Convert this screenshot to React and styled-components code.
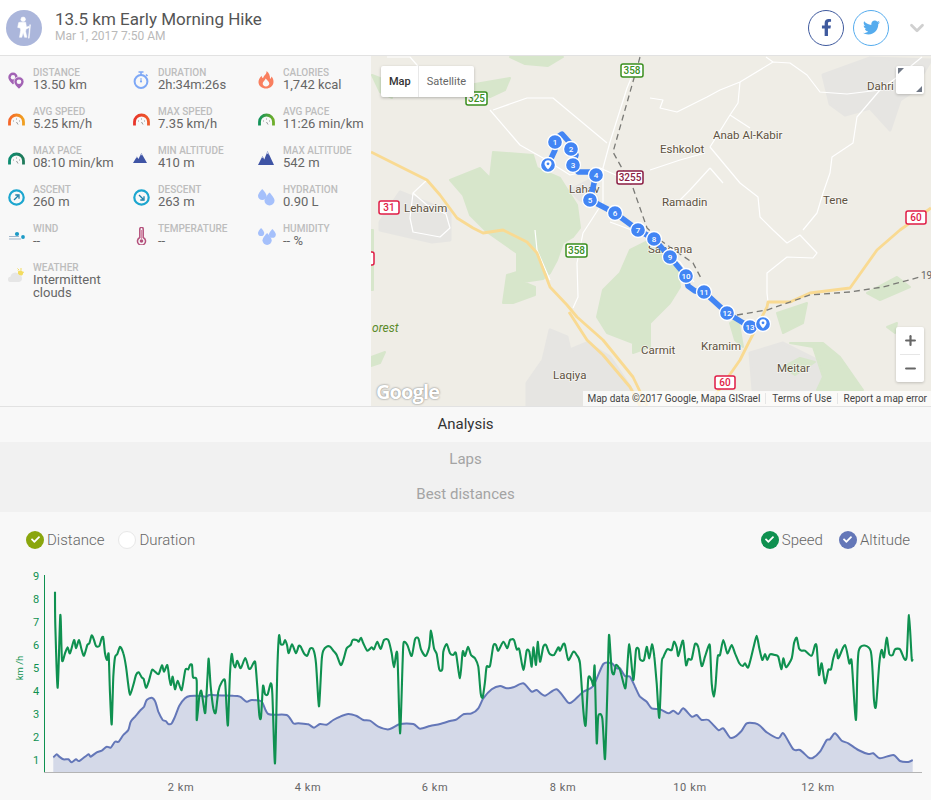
import styled, { createGlobalStyle } from 'styled-components'
import { FaFacebookF, FaTwitter, FaCheck } from 'react-icons/fa'
import { ChevronDown, Plus, Minus } from 'lucide-react'

const GlobalStyle = createGlobalStyle`
  html, body { margin: 0; padding: 0; background: #f8f8f8; }
  body { font-family: Roboto, 'Liberation Sans', sans-serif; overflow: hidden; }
`

const Page = styled.div`
  width: 931px;
  height: 800px;
  overflow: hidden;
  background: #f8f8f8;
`

const Header = styled.header`
  display: flex;
  align-items: center;
  height: 55px;
  padding: 0 3px 0 6px;
  box-sizing: content-box;
  background: #fff;
  border-bottom: 1px solid #e2e2e2;
`

const Avatar = styled.div`
  flex: none;
  display: flex;
  align-items: center;
  justify-content: center;
  width: 36px;
  height: 36px;
  border-radius: 50%;
  background: #abb6db;
`

const TitleBlock = styled.div`
  flex: 1;
  margin-left: 13px;
  margin-top: -3px;
`

const Title = styled.div`
  font-size: 17px;
  line-height: 20px;
  color: #555;
`

const SubTitle = styled.div`
  font-size: 12px;
  line-height: 14px;
  color: #b9b9b9;
`

const ShareButton = styled.div`
  display: flex;
  align-items: center;
  justify-content: center;
  width: 34px;
  height: 34px;
  margin-left: 9px;
  border-radius: 50%;
  background: #fff;
  border: 1px solid ${(p) => p.$color};
  color: ${(p) => p.$color};
  font-size: ${(p) => p.$size}px;
`

const Chevron = styled.div`
  display: flex;
  margin-left: 17px;
  color: #d0d0d0;
`

const Summary = styled.section`
  display: flex;
  height: 350px;
  border-bottom: 1px solid #e2e2e2;
`

const StatGrid = styled.div`
  flex: none;
  width: 363px;
  padding: 11px 0 0 8px;
  display: grid;
  grid-template-columns: repeat(3, 125px);
  grid-auto-rows: 39px;
`

const Stat = styled.div`
  display: flex;
  align-items: flex-start;
`

const StatIcon = styled.div`
  flex: none;
  width: 25px;
  height: 26px;
  display: flex;
  align-items: center;
`

const StatText = styled.div`
  flex: 1;
  min-width: 0;
`

const StatLabel = styled.div`
  font-size: 10px;
  font-weight: 500;
  line-height: 11px;
  color: #bdbdbd;
`

const StatValue = styled.div`
  font-size: 13px;
  line-height: 13px;
  color: #666;
`

const MapPane = styled.div`
  position: relative;
  flex: 1;
  overflow: hidden;
  background: #efede6;
`

const MapDrawing = styled.svg`
  display: block;
  width: 560px;
  height: 350px;
`

const MapTypes = styled.div`
  position: absolute;
  left: 10px;
  top: 10px;
  display: flex;
  height: 31px;
  background: #fff;
  border-radius: 2px;
  box-shadow: 0 1px 3px rgba(0, 0, 0, 0.25);
  font-size: 11px;
`

const MapType = styled.div`
  display: flex;
  align-items: center;
  padding: ${(p) => (p.$active ? '0 7px 0 8px' : '0 8px')};
  color: ${(p) => (p.$active ? '#333' : '#666')};
  font-weight: ${(p) => (p.$active ? 500 : 400)};
  border-left: ${(p) => (p.$active ? 'none' : '1px solid #e8e8e8')};
`

const FullscreenButton = styled.div`
  position: absolute;
  right: 7px;
  top: 10px;
  width: 28px;
  height: 28px;
  background: #fff;
  border-radius: 2px;
  box-shadow: 0 1px 3px rgba(0, 0, 0, 0.2);
`

const ZoomControl = styled.div`
  position: absolute;
  right: 7px;
  top: 271px;
  width: 28px;
  height: 55px;
  display: flex;
  flex-direction: column;
  align-items: center;
  background: #fff;
  border-radius: 2px;
  color: #666;
  box-shadow: 0 1px 3px rgba(0, 0, 0, 0.2);
`

const ZoomStep = styled.div`
  flex: 1;
  display: flex;
  align-items: center;
  justify-content: center;
`

const ZoomDivider = styled.div`
  width: 20px;
  height: 1px;
  background: #e6e6e6;
`

const GoogleMark = styled.div`
  position: absolute;
  left: 5px;
  bottom: 1px;
  font-family: 'Open Sans', 'Liberation Sans', sans-serif;
  font-size: 20px;
  font-weight: 700;
  line-height: 26px;
  letter-spacing: -0.9px;
  color: #fff;
  text-shadow: 0 0 2px rgba(90, 90, 90, 0.9);
`

const Attribution = styled.div`
  position: absolute;
  right: 0;
  bottom: 0;
  display: flex;
  height: 15px;
  align-items: center;
  background: rgba(255, 255, 255, 0.72);
  font-size: 10px;
  color: #444;
  white-space: nowrap;
`

const AttributionItem = styled.span`
  padding: 0 4px;
  & + & { margin-left: 1px; border-left: 1px solid #e6e6e6; padding-left: 6px; }
`

const Tab = styled.div`
  height: 35px;
  padding-bottom: 2px;
  box-sizing: border-box;
  display: flex;
  align-items: center;
  justify-content: center;
  font-size: 15px;
  color: ${(p) => (p.$active ? '#333' : '#a4a4a4')};
  background: ${(p) => (p.$active ? '#f8f8f8' : '#f1f1f1')};
`

const SeriesBar = styled.div`
  display: flex;
  align-items: center;
  justify-content: space-between;
  height: 48px;
  padding: 7px 21px 0 26px;
  box-sizing: border-box;
`

const SeriesGroup = styled.div`
  display: flex;
  gap: ${(p) => p.$gap}px;
`

const Series = styled.div`
  display: flex;
  align-items: center;
  gap: 3px;
  font-size: 15px;
  font-weight: 300;
  color: #666;
`

const SeriesDot = styled.span`
  display: flex;
  align-items: center;
  justify-content: center;
  width: 18px;
  height: 18px;
  box-sizing: border-box;
  border-radius: 50%;
  color: #fff;
  font-size: 9px;
  background: ${(p) => p.$color || '#fff'};
  border: ${(p) => (p.$color ? 'none' : '1px solid #e8e8e8')};
`

const ChartDrawing = styled.svg`
  display: block;
  width: 931px;
  height: 240px;
`

const pins = (
  <svg width="17" height="17" viewBox="0 0 17 17" fill="none">
    <path d="M5 .5A4.700 4.700 0 0 0 .3 5.200C.3 8.300 5 12.500 5 12.500s4.700-4.200 4.700-7.300A4.700 4.700 0 0 0 5 .5z" fill="#a262b4" />
    <circle cx="5" cy="5.200" r="2.200" fill="#f8f8f8" />
    <path d="M11 4.800a5 5 0 0 0-5 5c0 3.300 5 7.200 5 7.200s5-3.900 5-7.200a5 5 0 0 0-5-5z" fill="#a262b4" stroke="#f8f8f8" strokeWidth=".7" />
    <circle cx="11" cy="9.800" r="2.300" fill="#f8f8f8" />
  </svg>
)

const stopwatch = (
  <svg width="16" height="18" viewBox="0 0 16 18" fill="none">
    <circle cx="8" cy="10.500" r="6.400" stroke="#7ea8f6" strokeWidth="2" />
    <path d="M5.500 1h5M8 1v3M13 3.500l1.500 1.500" stroke="#7ea8f6" strokeWidth="1.600" />
    <circle cx="8" cy="10.500" r="1.100" fill="#7ea8f6" />
    <path d="M8 10.500V7" stroke="#7ea8f6" />
  </svg>
)

const flame = (
  <svg width="16" height="18" viewBox="0 0 16 18">
    <path d="M8.500 0c.6 3-3 4.600-3.400 7.300C4 6.800 3.700 5.600 3.800 4.700 1.500 6.800.3 9 .5 11.500.8 15 4 17.500 8 17.500s7.300-2.600 7.500-6.500c.1-2.400-.9-4-2-5.400-.2 1-.7 1.900-1.500 2.300C12.300 5 11 1.500 8.500 0z" fill="#f97f5f" />
    <path d="M8 15.500c-2 0-3.300-1.400-3.300-3 0-1.900 2-2.700 3-5 1.300 1.700 3.600 3.100 3.600 5.100 0 1.700-1.500 2.900-3.300 2.900z" fill="#f8f8f8" />
  </svg>
)

function Gauge({ id, from, to }) {
  return (
    <svg width="17" height="13" viewBox="0 0 17 13" fill="none">
      <defs>
        <linearGradient id={id} x1="0" y1="0" x2="1" y2="0">
          <stop offset="0" stopColor={from} />
          <stop offset="1" stopColor={to} />
        </linearGradient>
      </defs>
      <path d="M1.500 12.500V9a7 7 0 0 1 14 0v3.500" stroke={`url(#${id})`} strokeWidth="2.800" />
      <path d="M8.500 5.500v1M5.500 7.500v1M11.500 7.500v1M8.500 9l1.500 2.500" stroke="#999" strokeWidth="1" />
    </svg>
  )
}

function Peaks({ width, height }) {
  return (
    <svg width={width} height={height} viewBox="0 0 16 14" preserveAspectRatio="none">
      <path d="M0 14 4.500 5 6.300 8.500 9.500 0 16 14z" fill="#3f54a5" />
      <path d="M4.500 5 3.400 7.200 4.500 6.500l1 1zM9.500 0 8.200 3.500 9.500 2.700l1.300 1z" fill="#c7cfe8" />
    </svg>
  )
}

function Compass({ down }) {
  return (
    <svg width="17" height="17" viewBox="0 0 17 17" fill="none">
      <circle cx="8.500" cy="8.500" r="7.200" stroke="#1ca6cf" strokeWidth="2.200" />
      <g transform={down ? 'rotate(90 8.500 8.500)' : undefined}>
        <path d="M6 11l4-4M7.300 6h3.700v3.700" stroke="#1c7fa8" strokeWidth="1.300" />
      </g>
    </svg>
  )
}

const Drop = ({ x, y, s }) => (
  <path
    transform={`translate(${x} ${y}) scale(${s})`}
    d="M5 0C5 0 0 5 0 8a5 5 0 0 0 10 0C10 5 5 0 5 0z"
    fill="#a5c0fb"
  />
)

const drops = (
  <svg width="17" height="17" viewBox="0 0 17 17">
    <Drop x={0} y={0} s={0.85} />
    <Drop x={6.500} y={3.500} s={1} />
  </svg>
)

const threeDrops = (
  <svg width="18" height="17" viewBox="0 0 18 17">
    <Drop x={0} y={0} s={0.62} />
    <Drop x={11} y={1} s={0.68} />
    <Drop x={4.500} y={5} s={0.92} />
  </svg>
)

const wind = (
  <svg width="18" height="10" viewBox="0 0 18 10" fill="none">
    <path d="M1 5.500h10M1 8h12" stroke="#9fb6cc" strokeWidth="1.100" />
    <circle cx="9" cy="3" r="2.100" fill="#1c9ac6" />
    <circle cx="15" cy="6" r="1.900" fill="#1c9ac6" />
  </svg>
)

const thermometer = (
  <svg width="11" height="18" viewBox="0 0 11 18" fill="none" style={{ marginLeft: 3 }}>
    <path d="M3.800 10.500V2a1.700 1.700 0 0 1 3.400 0v8.500a4 4 0 1 1-3.400 0z" stroke="#b4517c" strokeWidth="1.500" />
    <circle cx="5.500" cy="14" r="1.800" fill="#b4517c" />
    <path d="M5.500 3v9" stroke="#d68ca9" />
  </svg>
)

const cloud = (
  <svg width="17" height="16" viewBox="0 0 17 16">
    <path d="M10 3.500l1.500 1.800M13 1v2.500M16 5l-2 1M9.500 1.500l1.500 1.500" stroke="#f3dc60" strokeWidth="1" />
    <circle cx="12.500" cy="6" r="2.600" fill="#f3dc60" />
    <path d="M3 15a2.800 2.800 0 0 1-.4-5.600A4.500 4.500 0 0 1 11 8a3.500 3.500 0 0 1 3 3.500A3.500 3.500 0 0 1 11 15z" fill="#e6e6e6" />
  </svg>
)

const stats = [
  ['DISTANCE', '13.50 km', pins],
  ['DURATION', '2h:34m:26s', stopwatch],
  ['CALORIES', '1,742 kcal', flame],
  ['AVG SPEED', '5.25 km/h', <Gauge id="g1" from="#f5672a" to="#f0a020" />],
  ['MAX SPEED', '7.35 km/h', <Gauge id="g2" from="#e8352a" to="#ee5a2a" />],
  ['AVG PACE', '11:26 min/km', <Gauge id="g3" from="#14935a" to="#6fae2a" />],
  ['MAX PACE', '08:10 min/km', <Gauge id="g4" from="#0d8c70" to="#207a5a" />],
  ['MIN ALTITUDE', '410 m', <Peaks width={14} height={10} />],
  ['MAX ALTITUDE', '542 m', <Peaks width={16} height={14} />],
  ['ASCENT', '260 m', <Compass />],
  ['DESCENT', '263 m', <Compass down />],
  ['HYDRATION', '0.90 L', drops],
  ['WIND', '--', wind],
  ['TEMPERATURE', '--', thermometer],
  ['HUMIDITY', '-- %', threeDrops],
  ['WEATHER', 'Intermittent clouds', cloud],
]

const forests = [
  '450,180 480,168 490,178 493,152 533,155 537,168 560,178 577,205 580,228 573,237 563,243 557,260 550,273 543,279 523,282 535,287 535,295 513,303 503,303 507,275 517,272 517,253 487,232 470,215 463,195',
  '650,240 663,253 678,270 680,287 670,303 650,323 650,347 633,353 633,343 607,333 597,317 603,290 620,273 630,250',
  '371,357 385,352 380,363 371,366',
  '371,230 373,230 373,290 371,290',
  '777,313 807,303 803,323 783,333',
  '823,343 840,357 863,390 817,390 823,377 813,347 790,343',
  '867,293 897,277 910,287 880,300',
  '887,327 897,323 895,333',
  '730,323 738,318 743,347 735,340',
  '510,57 563,57 548,66 525,64',
  '437,82 475,84 510,78 505,90 490,97 465,90',
  '372,75 385,80 392,98 380,92',
  '783,367 800,358 815,362 795,375',
]

const towns = [
  '380,222 400,192 450,212 450,240 432,242 380,230',
  '527,383 543,360 550,330 567,337 570,350 587,343 610,357 630,387 643,406 527,406',
  '823,75 870,58 931,60 912,92 900,100 890,130 870,108 845,115 830,104',
  '750,353 783,343 823,363 837,390 753,390',
  '570,190 590,180 600,205 580,200',
]

const minorRoads = [
  '387,57 410,57 423,72',
  '490,110 520,145 543,158 570,175 600,168 618,176',
  '493,110 527,98 553,98 577,118 607,143',
  '640,57 627,88 610,142 603,168 603,202 583,233 577,263 578,297 573,308',
  '427,180 413,193 410,218 413,232 440,237 450,228 446,214 427,205 413,193',
  '535,230 537,250 550,280',
  '610,222 637,232 650,240 680,262 694,282',
  '773,230 787,243 800,235 817,253 813,258 787,257 767,273 767,293 768,302',
  '650,98 663,100 660,108 677,112 707,97 720,90 740,82 773,62 790,63 807,75 820,92 847,94 880,90 857,117 853,143 832,157 830,173 823,193 817,213 803,230',
  '740,82 738,103 730,115 710,147 740,183 758,197 760,217 773,230',
  '650,170 680,160 705,153',
  '730,115 750,128',
  '710,168 690,190 680,200',
  '710,168 723,183',
  '880,90 900,75 922,57',
  '766,57 773,62',
]

const highways = [
  '371,152 403,168 427,180 440,195 457,218 473,228 483,233 503,230 527,242 537,253 550,287 567,305 577,317 603,340 633,377 647,406',
  '569,312 587,340 603,355 630,387 640,406',
  '710,403 740,360 750,340 767,307 768,302 790,302 810,293 850,288 877,250 900,230 931,208',
]

const rails = [
  '640,57 613,152 633,188 647,228 660,240 693,263 702,280',
  '737,315 767,310 810,295 850,292 883,287 920,277',
]

const shields = [
  [621, 64, 22, '358', '#3a8f1f'],
  [466, 92, 21, '325', '#3a8f1f'],
  [617, 171, 26, '3255', '#8a1c43'],
  [379, 201, 20, '31', '#e01b45'],
  [566, 244, 21, '358', '#3a8f1f'],
  [715, 376, 20, '60', '#e01b45'],
  [906, 211, 20, '60', '#e01b45'],
  [356, 252, 18, '', '#e01b45'],
]

const places = [
  ['Lehavim', 404, 212],
  ['Lahav', 569, 193],
  ['Eshkolot', 660, 153],
  ['Anab Al-Kabir', 713, 139],
  ['Ramadin', 662, 206],
  ['Tene', 823, 204],
  ['Dahri', 867, 90],
  ['Sansana', 648, 253],
  ['Carmit', 641, 354],
  ['Kramim', 701, 350],
  ['Laqiya', 553, 379],
  ['Meitar', 777, 372],
]

const markers = [
  [555, 142], [571, 149], [573, 165], [596, 175], [590, 200], [615, 213], [638, 230],
  [654, 239], [670, 257], [686, 276], [704, 292], [727, 313], [750, 327],
]

const routeLine =
  '548,165 555,150 556,138 562,134 571,144 576,155 573,165 578,172 590,172 596,175 590,200 615,213 638,230 654,239 670,257 686,276 688,286 695,291 704,292 727,313 750,327 763,324'

const MapPin = ({ x, y }) => (
  <g transform={`translate(${x} ${y})`}>
    <circle r="7.500" fill="#4285f4" stroke="#fff" strokeWidth="1.300" />
    <path d="M0 4.500S-3.500 1-3.500-1.200a3.500 3.500 0 0 1 7 0C3.500 1 0 4.500 0 4.500z" fill="#fff" />
    <circle cy="-1.200" r="1.400" fill="#4285f4" />
  </g>
)

function MapCanvas() {
  return (
    <MapDrawing viewBox="371 56 560 350">
      {towns.map((p) => <polygon key={p} points={p} fill="#e6e5e2" stroke="#e6e5e2" strokeWidth="3" strokeLinejoin="round" />)}
      {forests.map((p) => <polygon key={p} points={p} fill="#d7e6cb" stroke="#d7e6cb" strokeWidth="2" strokeLinejoin="round" />)}
      {minorRoads.map((p) => (
        <polyline key={p} points={p} fill="none" stroke="#fff" strokeWidth="1.200" strokeLinejoin="round" />
      ))}
      {highways.map((p) => (
        <polyline key={p} points={p} fill="none" stroke="#f9da92" strokeWidth="2.800" strokeLinejoin="round" />
      ))}
      {rails.map((p) => (
        <polyline key={p} points={p} fill="none" stroke="#7a7a76" strokeWidth="1.300" strokeDasharray="6 4" />
      ))}
      {shields.map(([x, y, w, label, color]) => (
        <g key={`${x}-${y}`}>
          <rect x={x} y={y} width={w} height={13} rx="2" fill="#fff" stroke={color} strokeWidth="1.500" />
          <text x={x + w / 2} y={y + 10} textAnchor="middle" fontFamily="Roboto, sans-serif" fontSize="10" fontWeight="500" fill={color}>{label}</text>
        </g>
      ))}
      {places.map(([name, x, y]) => (
        <text key={name} x={x} y={y} fontFamily="Roboto, sans-serif" fontSize="11.500" fill="#5e5240" stroke="#fff" strokeWidth="1.500" strokeOpacity=".65" paintOrder="stroke">{name}</text>
      ))}
      <text x={372} y={332} fontFamily="Roboto, sans-serif" fontSize="12" fontStyle="italic" fill="#5a8a2a">orest</text>
      <text x={921} y={279} fontFamily="Roboto, sans-serif" fontSize="10" fill="#666">19</text>
      <polyline points={routeLine} fill="none" stroke="#4285f4" strokeWidth="5.500" strokeLinejoin="round" />
      <MapPin x={548} y={165} />
      {markers.map(([x, y], i) => (
        <g key={i}>
          <circle cx={x} cy={y} r="7.500" fill="#4285f4" stroke="#fff" strokeWidth="1.300" />
          <text x={x} y={y + 3} textAnchor="middle" fontFamily="Roboto, sans-serif" fontSize="8" fontWeight="500" fill="#fff">{i + 1}</text>
        </g>
      ))}
      <MapPin x={763} y={324} />
    </MapDrawing>
  )
}

// traced from the chart, three runs of points at 3x, each with its own x offset
const speedRuns = [
  [0, [165,95,166,195,173,383,181,165,186,300,195,280,203,262,210,280,222,240,228,265,237,240,245,270,252,287,262,255,268,250,275,226,282,240,288,258,298,258,305,235,310,233,315,280,321,300,326,283,330,400,335,493,340,350,345,292,352,282,360,260,370,280,378,320,385,375,390,405,400,375,408,345,416,337,425,352,431,357,438,383,446,365,456,330,465,335,476,342,486,316,492,335,502,315,508,355,513,375,518,350,525,388,533,362,545,390,556,330,565,328,570,315,576,315,579,352,590,362,590,480,598,410,604,392,610,430,616,458,622,360,626,296,632,380,640,445,647,458,655,395,665,367,675,362,680,450,684,494,690,340,695,282,700,310,706,322,712,302,722,325,736,294,746,325,752,325,760,310,766,308,772,380,778,465,783,472,789,378,795,402,803,403,812,370,817,400,825,610,832,330,837,227,842,252,850,253,855,240,861,255,866,280,876,253,888,280,896,258,902,260,912,280,922,287,930,266,940,268,948,310,955,420,958,432]],
  [310, [35,300,40,272,50,260,60,260,70,272,80,285,92,315,100,300,110,265,122,255,128,240,140,240,146,245,153,233,160,250,172,272,185,262,192,268,202,245,212,267,222,240,235,240,245,280,252,322,262,280,270,520,278,300,281,247,292,255,305,288,315,238,325,235,333,268,347,288,358,260,363,212,372,265,380,282,388,328,397,328,400,275,410,252,420,280,430,285,438,280,450,355,458,275,465,288,474,260,483,285,495,295,505,320,512,400,518,412,525,365,530,320,540,318,550,257,558,255,565,272,580,245,592,265,600,240,612,240,620,268,628,268,640,330,650,272,658,275,665,320,670,262,678,315,683,245,690,305,700,260,708,255,718,280,732,285,745,262,750,272,760,252,765,255,775,300,790,275,800,285,810,310,820,450,827,495,835,355,845,362,850,375,854,320,860,548,865,468,877,475,885,597,892,400,897,225,905,330,912,342,918,315,930,330]],
  [620, [15,385,20,350,28,253,40,360,48,270,56,268,60,298,72,300,80,260,88,295,96,253,103,290,110,370,118,473,125,310,130,292,142,268,155,270,162,245,170,262,175,288,185,250,190,245,198,315,205,297,215,297,225,252,235,262,245,318,255,290,265,260,270,260,275,370,282,410,287,370,293,290,300,285,310,240,322,280,335,255,345,280,358,310,368,318,375,310,385,322,400,265,410,227,418,265,427,300,435,282,442,300,450,283,465,285,475,290,484,328,490,295,498,322,515,295,522,250,530,233,537,265,545,272,555,272,575,287,585,255,590,260,597,345,605,310,615,370,625,330,633,328,640,295,650,268,655,295,675,255,688,310,695,305,708,480,716,273,752,273,762,420,768,438,778,310,785,270,792,292,800,233,808,282,818,285,825,268,840,268,852,295,860,290,867,165,875,295,878,295]],
]

const altitudeRuns = [
  [0, [160,592,170,583,178,590,190,598,205,598,215,607,228,598,238,603,265,583,272,590,290,577,305,572,320,560,332,563,345,545,356,545,370,525,385,510,392,485,405,470,420,452,432,440,440,420,455,413,466,425,475,455,488,480,497,483,505,492,515,490,525,470,538,437,555,415,570,408,605,408,618,410,630,404,650,406,700,407,720,410,740,425,755,420,785,425,805,462,860,465,880,490,895,490,925,493]],
  [310, [12,503,30,492,50,494,70,480,90,470,115,462,140,468,160,480,180,482,205,500,237,508,270,492,310,492,330,506,360,498,390,492,420,483,440,478,460,463,485,460,505,445,520,415,545,388,570,378,590,385,610,382,640,370,665,395,680,390,705,407,740,388,775,428,790,423,820,395,850,378,880,312,905,310,920,325]],
  [620, [0,325,15,348,30,350,45,380,60,410,80,425,95,445,120,448,145,460,160,452,175,462,190,445,215,470,230,465,245,480,265,480,295,510,310,505,330,533,345,530,365,512,380,490,405,490,420,497,440,517,475,535,490,520,520,568,540,570,565,592,578,594,600,575,620,540,630,538,645,520,665,542,685,550,715,570,745,582,760,580,780,595,820,585,840,603,865,606,878,600]],
]

const toPoints = (runs) =>
  runs.flatMap(([offset, values]) => {
    const out = []
    for (let i = 0; i < values.length; i += 2) {
      out.push([offset + values[i] / 3, values[i + 1] / 3])
    }
    return out
  })

// the chart draws rounded lines, so pass the traced points through a spline
const smoothLine = (pts) => {
  let d = `M${pts[0][0].toFixed(1)} ${pts[0][1].toFixed(1)}`
  for (let i = 0; i < pts.length - 1; i++) {
    const p0 = pts[i - 1] || pts[i]
    const p1 = pts[i]
    const p2 = pts[i + 1]
    const p3 = pts[i + 2] || p2
    const c1 = [p1[0] + (p2[0] - p0[0]) / 8, p1[1] + (p2[1] - p0[1]) / 8]
    const c2 = [p2[0] - (p3[0] - p1[0]) / 8, p2[1] - (p3[1] - p1[1]) / 8]
    d += `C${c1[0].toFixed(1)} ${c1[1].toFixed(1)} ${c2[0].toFixed(1)} ${c2[1].toFixed(1)} ${p2[0].toFixed(1)} ${p2[1].toFixed(1)}`
  }
  return d
}

const speedLine = smoothLine(toPoints(speedRuns))
const altitudeLine = smoothLine(toPoints(altitudeRuns))
const altitudeArea = `${altitudeLine}L912.7 212L53.3 212Z`

const yTicks = [1, 2, 3, 4, 5, 6, 7, 8, 9]
const xTicks = [[181, '2 km'], [308, '4 km'], [435, '6 km'], [563, '8 km'], [690, '10 km'], [818, '12 km']]

function ElevationChart() {
  return (
    <ChartDrawing viewBox="0 0 931 240">
      <path d={altitudeArea} fill="#d4d9e8" />
      <path d={altitudeLine} fill="none" stroke="#6477b8" strokeWidth="2" strokeLinejoin="round" />
      <path d={speedLine} fill="none" stroke="#0f9150" strokeWidth="2.100" strokeLinejoin="round" />
      <line x1="44.500" y1="15" x2="44.500" y2="212" stroke="#0f9150" strokeWidth="1" />
      <line x1="44" y1="212.500" x2="922" y2="212.500" stroke="#b4b4b4" strokeWidth="1" />
      {yTicks.map((n) => (
        <text key={n} x="36" y={199.500 - (n - 1) * 22.95 + 4} textAnchor="middle" fontFamily="Roboto, sans-serif" fontSize="11" fill="#0f9150">{n}</text>
      ))}
      <text transform="translate(23 108) rotate(-90)" textAnchor="middle" fontFamily="Roboto, sans-serif" fontSize="9.500" fill="#0f9150">km /h</text>
      {xTicks.map(([x, label]) => (
        <text key={label} x={x} y="231" textAnchor="middle" fontFamily="Roboto, sans-serif" fontSize="11" letterSpacing=".6" fill="#666">{label}</text>
      ))}
    </ChartDrawing>
  )
}

const HikerIcon = () => (
  <svg width="20" height="23" viewBox="0 0 24 28" fill="#fff" stroke="#fff" strokeWidth=".6">
    <circle cx="11" cy="4" r="2.800" />
    <path d="M7.500 7.500h6.500l1 6 3-1 .6 1.500-4.200 2-.4 3 1.500 7h-2.800l-1.700-6-1.700 6H6.500L8 17l-.7-2.500-3-.6L5.500 8z" />
    <path d="M19 10.500l.9.200L18.300 27h-.9z" />
  </svg>
)

function App() {
  return (
    <Page>
      <GlobalStyle />
      <Header>
        <Avatar><HikerIcon /></Avatar>
        <TitleBlock>
          <Title>13.5 km Early Morning Hike</Title>
          <SubTitle>Mar 1, 2017 7:50 AM</SubTitle>
        </TitleBlock>
        <ShareButton $color="#3f5a9e" $size={17}><FaFacebookF /></ShareButton>
        <ShareButton $color="#55acee" $size={17}><FaTwitter /></ShareButton>
        <Chevron><ChevronDown size={22} strokeWidth={3} /></Chevron>
      </Header>
      <Summary>
        <StatGrid>
          {stats.map(([label, value, icon]) => (
            <Stat key={label}>
              <StatIcon>{icon}</StatIcon>
              <StatText>
                <StatLabel>{label}</StatLabel>
                <StatValue>{value}</StatValue>
              </StatText>
            </Stat>
          ))}
        </StatGrid>
        <MapPane>
          <MapCanvas />
          <MapTypes>
            <MapType $active>Map</MapType>
            <MapType>Satellite</MapType>
          </MapTypes>
          <FullscreenButton>
            <svg width="28" height="28" viewBox="0 0 28 28">
              <path d="M2 2h6L2 8zM26 26h-6l6-6z" fill="#6f7785" />
            </svg>
          </FullscreenButton>
          <ZoomControl>
            <ZoomStep><Plus size={15} strokeWidth={3.5} /></ZoomStep>
            <ZoomDivider />
            <ZoomStep><Minus size={15} strokeWidth={3.5} /></ZoomStep>
          </ZoomControl>
          <GoogleMark>Google</GoogleMark>
          <Attribution>
            <AttributionItem>Map data ©2017 Google, Mapa GISrael</AttributionItem>
            <AttributionItem>Terms of Use</AttributionItem>
            <AttributionItem>Report a map error</AttributionItem>
          </Attribution>
        </MapPane>
      </Summary>
      <Tab $active>Analysis</Tab>
      <Tab>Laps</Tab>
      <Tab>Best distances</Tab>
      <SeriesBar>
        <SeriesGroup $gap={14}>
          <Series><SeriesDot $color="#8aa60d"><FaCheck /></SeriesDot>Distance</Series>
          <Series><SeriesDot />Duration</Series>
        </SeriesGroup>
        <SeriesGroup $gap={16}>
          <Series><SeriesDot $color="#0f9150"><FaCheck /></SeriesDot>Speed</Series>
          <Series><SeriesDot $color="#6477b8"><FaCheck /></SeriesDot>Altitude</Series>
        </SeriesGroup>
      </SeriesBar>
      <ElevationChart />
    </Page>
  )
}

export default App
